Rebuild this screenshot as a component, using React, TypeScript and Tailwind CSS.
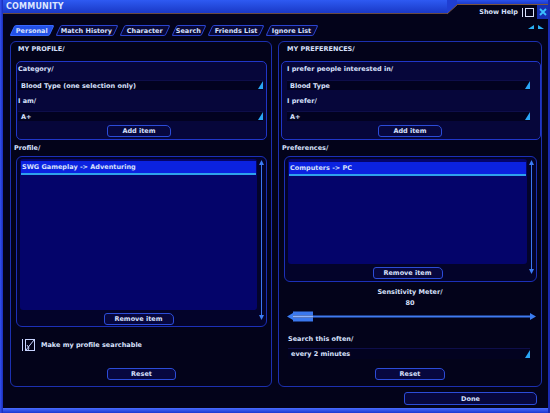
import React from 'react';

type TabDef = { label: string; width: string; active?: boolean };

const tabs: TabDef[] = [
  { label: 'Personal', width: 'w-[40px]', active: true },
  { label: 'Match History', width: 'w-[58px]' },
  { label: 'Character', width: 'w-[46px]' },
  { label: 'Search', width: 'w-[30px]' },
  { label: 'Friends List', width: 'w-[52px]' },
  { label: 'Ignore List', width: 'w-[48px]' },
];

const Tab = ({ label, width, active }: TabDef) => (
  <div
    className={`-skew-x-[25deg] h-[11px] ${width} flex items-center justify-center rounded-[2px] border ${
      active ? 'bg-[#2250e6] border-[#3868ff]' : 'bg-[#080838] border-[#2a44d0]'
    }`}
  >
    <span className="skew-x-[25deg] whitespace-nowrap">{label}</span>
  </div>
);

const Select = ({ value, className = '' }: { value: string; className?: string }) => (
  <div className={`h-[10px] flex items-center justify-between bg-[#020220] border-t border-[#0e0e4a] pl-[3px] ${className}`}>
    <span className="whitespace-nowrap">{value}</span>
    <svg width="5" height="8" viewBox="0 0 5 8" className="mb-[1px]">
      <polygon points="5,0 5,8 0,8" fill="#2aa6f6" />
    </svg>
  </div>
);

const Button = ({ label, className = '' }: { label: string; className?: string }) => (
  <div
    className={`h-[12px] flex items-center justify-center rounded-[3px] rounded-tr-[5px] border border-[#2c4cd8] bg-[#07073e] ${className}`}
  >
    {label}
  </div>
);

const ScrollTrack = () => (
  <div className="w-[9px] flex flex-col items-center pt-[3px] pb-[5px]">
    <svg width="5" height="5" viewBox="0 0 5 5">
      <polygon points="2.5,0 5,5 0,5" fill="#3c7cf4" />
    </svg>
    <div className="flex-1 w-[1px] bg-[#3c78f0]" />
    <svg width="5" height="5" viewBox="0 0 5 5">
      <polygon points="0,0 5,0 2.5,5" fill="#3c7cf4" />
    </svg>
  </div>
);

const ListBox = ({
  item,
  fillHeight,
  boxClass,
  rowTop,
}: {
  item: string;
  fillHeight: string;
  boxClass: string;
  rowTop: string;
}) => (
  <div className={`rounded-[6px] border border-[#1c30b8] bg-[#03032a] flex ${boxClass}`}>
    <div className="flex-1 flex flex-col pl-[3px] pt-[2px]">
      <div className={`${fillHeight} rounded-[3px] bg-[#04046a] px-[1px] ${rowTop}`}>
        <div className="h-[14px] bg-[#0b22e0] border-b-2 border-[#2ea2ec] flex items-center pl-[1px]">
          {item}
        </div>
      </div>
      <Button label="Remove item" className="mt-[3px] mx-auto w-[70px]" />
    </div>
    <ScrollTrack />
  </div>
);

const Slider = () => (
  <svg width="249" height="11" viewBox="0 0 249 11" className="ml-[8px]">
    <polygon points="0,5.5 6,2 6,9" fill="#3a7cf2" />
    <rect x="6" y="4.5" width="237" height="2" fill="#3f7af0" />
    <polygon points="249,5.5 243,2 243,9" fill="#3a7cf2" />
    <rect x="6" y="0.5" width="20" height="3.5" fill="#3a78ee" />
    <rect x="6" y="7" width="20" height="3.5" fill="#3a78ee" />
    <rect x="6" y="4.5" width="20" height="2" fill="#8fb4ff" />
  </svg>
);

const SearchableCheck = () => (
  <svg width="13" height="12" viewBox="0 0 13 12">
    <line x1="0.5" y1="0" x2="0.5" y2="12" stroke="#c8d4ff" />
    <rect x="3.5" y="0.5" width="9" height="11" fill="none" stroke="#c8d4ff" />
    <line x1="4" y1="11" x2="12" y2="1" stroke="#c8d4ff" />
    <polyline points="5,6 7,9 6,11" fill="none" stroke="#c8d4ff" />
  </svg>
);

export default function App() {
  return (
    <div className="w-[550px] h-[413px] overflow-hidden flex bg-[#03031a] text-[#d8e0fc] font-['DejaVu_Sans',sans-serif] font-bold text-[6.5px] leading-[8px]">
      {/* left frame rail */}
      <div className="w-[3px] bg-gradient-to-r from-[#3452f0] to-[#1a2cb8]" />

      <div className="flex-1 flex flex-col">
        {/* title bar */}
        <div className="h-[19px] flex">
          <div className="w-[444px] h-[14px] bg-gradient-to-b from-[#2e5af2] to-[#1a38c6] border-b border-[#6a4a40] flex items-center pl-[3px] text-[8px] text-[#dce6ff] tracking-[0.2px]">
            COMMUNITY
          </div>
          <svg width="10" height="19" viewBox="0 0 10 19">
            <polygon points="0,0 10,0 10,5 0,14" fill="#1f3ed2" />
            <line x1="0" y1="14" x2="10" y2="5" stroke="#7a5440" />
          </svg>
          <div className="flex-1 flex flex-col">
            <div className="h-[5px] bg-gradient-to-b from-[#2a52ee] to-[#1c3ac8] border-b border-[#7a5440]" />
            <div className="flex-1 flex items-center justify-end">
              <span className="mr-[4px]">Show Help</span>
              <div className="w-[1px] h-[9px] bg-[#d8e0fc] mr-[2px]" />
              <div className="w-[9px] h-[9px] border border-[#d8e0fc] mr-[3px]" />
              <div className="w-[11px] h-[14px] bg-[#1630b4] flex items-center justify-center">
                <svg width="8" height="8" viewBox="0 0 8 8">
                  <path d="M1 1 L7 7 M7 1 L1 7" stroke="#3cc0ff" strokeWidth="1.8" />
                </svg>
              </div>
            </div>
          </div>
        </div>

        {/* tabs */}
        <div className="h-[11px] mt-[6px] flex items-center pl-[9px] gap-[6px]">
          {tabs.map((t) => (
            <Tab key={t.label} {...t} />
          ))}
          <div className="ml-auto mr-[4px] flex items-start gap-[4px] self-start">
            <svg width="6" height="4" viewBox="0 0 6 4">
              <polygon points="6,0 6,4 0,4" fill="#2ab0f4" />
            </svg>
            <svg width="6" height="4" viewBox="0 0 6 4">
              <polygon points="0,0 6,4 0,4" fill="#2ab0f4" />
            </svg>
          </div>
        </div>

        {/* panels */}
        <div className="h-[346px] mt-[5px] flex gap-[6px] pl-[7px]">
          {/* my profile */}
          <div className="w-[262px] rounded-[6px] border border-[#1c30b0] flex flex-col">
            <div className="pl-[7px] pt-[3px]">MY PROFILE/</div>
            <div className="mt-[8px] ml-[5px] mr-[4px] rounded-[5px] border border-[#2036c8] bg-[#06063a] flex flex-col pt-[3px] pb-[2px]">
              <div className="pl-[1px]">Category/</div>
              <Select value="Blood Type (one selection only)" className="mt-[7px] ml-[1px] mr-[3px]" />
              <div className="pl-[1px] mt-[7px]">I am/</div>
              <Select value="A+" className="mt-[6px] ml-[1px] mr-[3px]" />
              <Button label="Add item" className="mt-[4px] w-[64px] ml-[90px]" />
            </div>
            <div className="pl-[3px] mt-[4px]">Profile/</div>
            <ListBox
              item="SWG Gameplay -> Adventuring"
              fillHeight="h-[151px]"
              boxClass="mt-[4px] ml-[5px] mr-[4px] h-[171px] pb-[1px]"
              rowTop="pt-[2px]"
            />
            <div className="mt-[12px] pl-[11px] flex items-center gap-[6px]">
              <SearchableCheck />
              <span>Make my profile searchable</span>
            </div>
            <Button label="Reset" className="mt-auto mb-[6px] w-[69px] ml-[96px]" />
          </div>

          {/* my preferences */}
          <div className="w-[264px] rounded-[6px] border border-[#1c30b0] flex flex-col">
            <div className="pl-[8px] pt-[3px]">MY PREFERENCES/</div>
            <div className="mt-[8px] ml-[2px] rounded-[5px] border border-[#2036c8] bg-[#06063a] flex flex-col pt-[3px] pb-[2px]">
              <div className="pl-[5px]">I prefer people interested in/</div>
              <Select value="Blood Type" className="mt-[7px] ml-[5px] mr-[10px]" />
              <div className="pl-[5px] mt-[7px]">I prefer/</div>
              <Select value="A+" className="mt-[6px] ml-[5px] mr-[10px]" />
              <Button label="Add item" className="mt-[4px] w-[64px] ml-[96px]" />
            </div>
            <div className="pl-[3px] mt-[4px]">Preferences/</div>
            <ListBox
              item="Computers -> PC"
              fillHeight="h-[107px]"
              boxClass="mt-[4px] ml-[5px] mr-[4px] h-[126px] pb-[2px]"
              rowTop="pt-[3px]"
            />
            <div className="mt-[6px] text-center">Sensitivity Meter/</div>
            <div className="mt-[3px] text-center">80</div>
            <div className="mt-[4px] h-[11px] flex">
              <Slider />
            </div>
            <div className="mt-[13px] pl-[9px]">Search this often/</div>
            <Select value="every 2 minutes" className="mt-[5px] ml-[9px] mr-[11px] h-[11px]" />
            <Button label="Reset" className="mt-auto mb-[6px] w-[70px] ml-[96px]" />
          </div>
        </div>

        {/* footer */}
        <div className="flex-1 flex flex-col">
          <div className="flex justify-end pr-[11px] pt-[5px]">
            <Button label="Done" className="w-[133px] h-[13px]" />
          </div>
          <div className="mt-auto h-[5px] bg-gradient-to-b from-[#4a6cff] to-[#1c36d0]" />
        </div>
      </div>

      {/* right frame rail */}
      <div className="w-[2px] bg-[#1a2ab0]" />
    </div>
  );
}
